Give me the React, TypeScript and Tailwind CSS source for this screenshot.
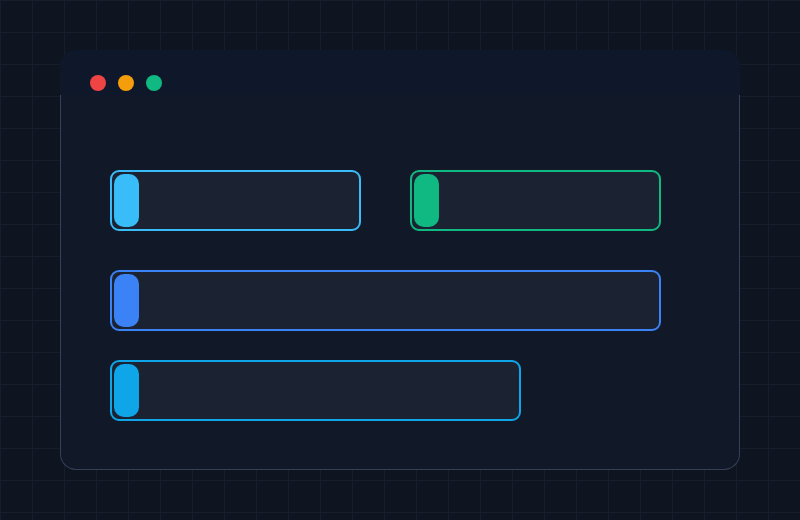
const bars = [
  { id: "a", width: "w-[251px]", border: "border-[#38bdf8]", pill: "bg-[#38bdf8]" },
  { id: "b", width: "w-[251px]", border: "border-[#10b981]", pill: "bg-[#10b981]" },
]

function Bar({ width, border, pill }: { width: string; border: string; pill: string }) {
  return (
    <div className={`${width} h-[61px] rounded-[9px] border-2 ${border} bg-[#1b2333] p-[2px]`}>
      <div className={`w-[25px] h-full rounded-[10px] ${pill}`}></div>
    </div>
  )
}

export default function App() {
  return (
    <div className="h-[520px] w-[800px] overflow-hidden bg-[#0f1520] bg-[linear-gradient(to_right,#161e2c_1px,transparent_1px),linear-gradient(to_bottom,#161e2c_1px,transparent_1px)] bg-[size:32px_32px] pt-[50px] px-[60px]">
      {/* Window */}
      <div className="w-[680px] h-[420px] flex flex-col rounded-2xl">
        {/* Title bar */}
        <div className="h-[45px] shrink-0 rounded-t-2xl bg-[#0f182a] pl-[30px] pt-[25px] flex gap-3">
          <div className="w-4 h-4 rounded-full bg-[#ef4444]"></div>
          <div className="w-4 h-4 rounded-full bg-[#f59e0b]"></div>
          <div className="w-4 h-4 rounded-full bg-[#10b981]"></div>
        </div>

        {/* Body */}
        <div className="flex-1 rounded-b-2xl border-x-[1.5px] border-b-[1.5px] border-[#334155] bg-[#111827] pl-[48.5px] pt-[75px]">
          <div className="flex gap-[49px]">
            {bars.map((b) => (
              <Bar key={b.id} width={b.width} border={b.border} pill={b.pill} />
            ))}
          </div>
          <div className="mt-[39px]">
            <Bar width="w-[551px]" border="border-[#3b82f6]" pill="bg-[#3b82f6]" />
          </div>
          <div className="mt-[29px]">
            <Bar width="w-[411px]" border="border-[#0ea5e9]" pill="bg-[#0ea5e9]" />
          </div>
        </div>
      </div>
    </div>
  )
}
